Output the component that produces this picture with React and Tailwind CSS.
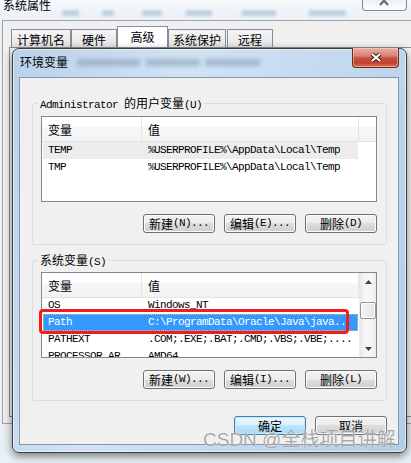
import React from "react";

const mono = "font-['Liberation_Mono',monospace] text-[11px] tracking-[-0.6px]";

const userVars = [
  { name: "TEMP", value: "%USERPROFILE%\\AppData\\Local\\Temp", hot: true },
  { name: "TMP", value: "%USERPROFILE%\\AppData\\Local\\Temp" },
];

const sysVars = [
  { name: "OS", value: "Windows_NT" },
  { name: "Path", value: "C:\\ProgramData\\Oracle\\Java\\java..", selected: true },
  { name: "PATHEXT", value: ".COM;.EXE;.BAT;.CMD;.VBS;.VBE;...." },
  { name: "PROCESSOR_AR", value: "AMD64" },
];

function A({ children }) {
  return <span className={mono}>{children}</span>;
}

function WinButton({ children, isDefault }) {
  const skin = isDefault
    ? "border-[#3c7fb1] bg-[linear-gradient(#eaf6fd_0%,#d9f0fc_50%,#bee6fd_50%,#a7d9f5_100%)] shadow-[inset_0_0_0_1px_#c9e9f9]"
    : "border-[#707070] bg-[linear-gradient(#f2f2f2_0%,#ebebeb_50%,#dddddd_50%,#cfcfcf_100%)] shadow-[inset_0_0_0_1px_#fcfcfc]";
  return (
    <button
      type="button"
      className={`flex h-[19px] w-[72px] shrink-0 items-center justify-center rounded-[3px] border text-[12px] leading-none text-black ${skin}`}
    >
      {children}
    </button>
  );
}

function Header() {
  return (
    <div className="relative z-10 flex h-[25px] shrink-0 border-b border-[#e2e3e5] bg-[linear-gradient(#ffffff_0%,#ffffff_42%,#f6f7f8_43%,#f2f3f5_100%)] leading-none">
      <div className="flex w-[100px] items-center border-r border-[#e3e4e6] pl-[6px] pt-[2px]">变量</div>
      <div className="flex w-[217px] items-center border-r border-[#e3e4e6] pl-[6px] pt-[2px]">值</div>
    </div>
  );
}

function Row({ v }) {
  const skin = v.selected
    ? "bg-[#3399ff] text-white outline outline-1 outline-dotted -outline-offset-1 outline-[#e9b76a]"
    : v.hot
    ? "bg-[#ececec] text-black"
    : "text-black";
  return (
    <div className={`flex h-[17px] w-[315px] shrink-0 items-center whitespace-nowrap ${skin}`}>
      <div className={`w-[100px] shrink-0 overflow-hidden pl-[5px] ${mono}`}>{v.name}</div>
      <div className={`flex-1 overflow-hidden pl-[5px] ${mono}`}>{v.value}</div>
    </div>
  );
}

function ScrollBar() {
  return (
    <div className="flex w-[17px] shrink-0 flex-col items-center border-l border-[#ebebeb] bg-[linear-gradient(90deg,#e8e8e8,#f6f6f6_30%,#f6f6f6_70%,#ebebeb)]">
      <div className="flex h-[17px] w-full items-center justify-center">
        <svg width="7" height="4" viewBox="0 0 7 4">
          <path d="M0 4 L3.5 0 L7 4 Z" fill="#404040" />
        </svg>
      </div>
      <div className="mt-[12px] h-[17px] w-[16px] rounded-[2px] border border-[#969696] bg-[linear-gradient(90deg,#f4f4f4,#e4e4e4)] shadow-[inset_0_0_0_1px_#fdfdfd]" />
      <div className="flex-1" />
      <div className="flex h-[17px] w-full items-center justify-center">
        <svg width="7" height="4" viewBox="0 0 7 4">
          <path d="M0 0 L3.5 4 L7 0 Z" fill="#404040" />
        </svg>
      </div>
    </div>
  );
}

function Tab({ label, width, selected }) {
  if (selected) {
    return (
      <div className={`flex h-[21px] ${width} justify-center border border-b-0 border-[#898c95] bg-white pt-[4px] leading-[12px]`}>
        {label}
      </div>
    );
  }
  return (
    <div className={`flex h-[18px] ${width} items-center justify-center border border-b-0 border-[#898c95] bg-[linear-gradient(#f6f6f6,#e3e3e3)] pt-[2px] leading-none`}>
      {label}
    </div>
  );
}

export default function App() {
  return (
    <div className="relative h-[463px] w-[411px] overflow-hidden bg-[#e9f1f6] font-['Noto_Sans_CJK_SC',sans-serif] text-[12px] text-black">
      {/* title bar of the window behind */}
      <div className="flex h-[20px] bg-[linear-gradient(#f5f8fb,#eaf1f7)]">
        <div className="-mt-[1px] pl-[3px] leading-[12px]">系统属性</div>
        <div className="mt-[10px] flex h-[6px] opacity-60 blur-[1.5px]">
          <div className="ml-[11px] w-[17px] bg-[#9fb9d6]" />
          <div className="ml-[23px] w-[12px] bg-[#9fb9d6]" />
          <div className="ml-[28px] w-[20px] bg-[#9fb9d6]" />
          <div className="ml-[24px] w-[26px] bg-[#9fb9d6]" />
          <div className="ml-[30px] w-[34px] bg-[#9fb9d6]" />
          <div className="ml-[33px] w-[37px] bg-[#9fb9d6]" />
        </div>
        <div className="ml-auto mr-[4px] flex h-[11px] w-[45px] items-end justify-center rounded-b-[4px] border border-t-0 border-[#8d8d8d] bg-[linear-gradient(#eef1f4,#ffffff)] pb-[3px]">
          <svg width="13" height="9" viewBox="0 0 13 9">
            <path d="M2 -2 L10 7 M10 -2 L2 7" stroke="#6a6a6a" strokeWidth="2.2" />
          </svg>
        </div>
      </div>

      {/* client of the window behind */}
      <div className="ml-[2px] h-[404px] border border-r-0 border-[#a3a3a3] bg-[#f0f0f0]">
        <div className="flex h-[26px] items-end pl-[8px]">
          <Tab label="计算机名" width="w-[60px]" />
          <Tab label="硬件" width="w-[46px]" />
          <Tab label="高级" width="w-[51px]" selected />
          <Tab label="系统保护" width="w-[58px]" />
          <div className="ml-[1px]">
            <Tab label="远程" width="w-[46px]" />
          </div>
        </div>
        <div className="ml-[6px] h-[370px] border border-r-0 border-[#898c95] bg-[#f7f7f7]" />
      </div>

      {/* 环境变量 dialog */}
      <div className="absolute left-[12px] top-[48px] flex h-[405px] w-[395px] flex-col rounded-[7px] border border-[#3d3d3d] bg-[linear-gradient(105deg,#b9d1ea_0%,#d1e2f4_35%,#c6dbf1_60%,#b4cde8_100%)] pb-[7px] pl-[6px] pr-[7px] shadow-[0_3px_9px_rgba(0,0,0,0.5),inset_0_0_0_1px_rgba(255,255,255,0.55)]">
        <div className="flex h-[28px] shrink-0">
          <div className="mt-[7px] pl-[1px] leading-[12px]">环境变量</div>
          <div className="mt-[10px] flex h-[7px] opacity-50 blur-[2px]">
            <div className="ml-[9px] w-[63px] bg-[#7f90a3]" />
            <div className="ml-[6px] w-[54px] bg-[#7f90a3]" />
            <div className="ml-[5px] w-[55px] bg-[#7f90a3]" />
          </div>
          <div className="-mt-px ml-auto flex h-[20px] w-[47px] items-center justify-center rounded-b-[4px] border border-t-0 border-[#6b2a20] bg-[linear-gradient(#eab0a2_0%,#d98373_40%,#c64c3a_55%,#c2432f_80%,#de7a5c_100%)] shadow-[inset_0_0_0_1px_rgba(255,220,210,0.45)]">
            <svg width="14" height="11" viewBox="0 0 14 11">
              <path d="M3 2 L11 9 M11 2 L3 9" stroke="#3a1b15" strokeWidth="4.2" />
              <path d="M3 2 L11 9 M11 2 L3 9" stroke="#ffffff" strokeWidth="2.2" />
            </svg>
          </div>
        </div>

        <div className="flex flex-1 flex-col border border-[#8497ad] bg-[#f0f0f0] pl-[12px] pr-[11px] pt-[18px]">
          <fieldset className="h-[149px] shrink-0 rounded-[3px] border border-[#d5dfe5] pl-[8px] pr-[9px] pt-[6px]">
            <legend className="-ml-[3px] h-[14px] px-[2px] leading-[14px]">
              <A>Administrator </A>的用户变量<A>(U)</A>
            </legend>
            <div className="flex h-[86px] flex-col overflow-hidden border border-[#828790] bg-white">
              <Header />
              <div className="pl-[1px]">
                {userVars.map((v) => (
                  <Row key={v.name} v={v} />
                ))}
              </div>
            </div>
            <div className="mt-[12px] flex h-[19px] justify-end gap-[9px]">
              <WinButton>新建<A>(N)...</A></WinButton>
              <WinButton>编辑<A>(E)...</A></WinButton>
              <WinButton>删除<A>(D)</A></WinButton>
            </div>
          </fieldset>

          <fieldset className="mt-[8px] h-[148px] shrink-0 rounded-[3px] border border-[#d5dfe5] pl-[8px] pr-[9px] pt-[5px]">
            <legend className="-ml-[3px] h-[14px] px-[2px] leading-[14px]">
              系统变量<A>(S)</A>
            </legend>
            <div className="relative">
              <div className="flex h-[86px] overflow-hidden border border-[#828790] bg-white">
                <div className="flex flex-1 flex-col overflow-hidden">
                  <Header />
                  <div className="-mt-px flex flex-col pl-[1px]">
                    {sysVars.map((v) => (
                      <Row key={v.name} v={v} />
                    ))}
                  </div>
                </div>
                <ScrollBar />
              </div>
              {/* red annotation */}
              <div className="absolute left-[-2px] top-[37px] h-[25px] w-[310px] rounded-[4px] border-[3px] border-[#f01d1d]" />
            </div>
            <div className="mt-[12px] flex h-[19px] justify-end gap-[9px]">
              <WinButton>新建<A>(W)...</A></WinButton>
              <WinButton>编辑<A>(I)...</A></WinButton>
              <WinButton>删除<A>(L)</A></WinButton>
            </div>
          </fieldset>

          <div className="mt-[15px] flex h-[19px] justify-end gap-[9px]">
            <WinButton isDefault>确定</WinButton>
            <WinButton>取消</WinButton>
          </div>
        </div>
      </div>

      {/* watermark */}
      <div className="absolute left-[203px] top-[430px] whitespace-nowrap font-['Liberation_Sans','Noto_Sans_CJK_SC',sans-serif] text-[19px] leading-[20px] text-[#989898]/85 [text-shadow:0_0_1px_#ffffff]">
        CSDN @全栈项目讲解
      </div>
    </div>
  );
}
